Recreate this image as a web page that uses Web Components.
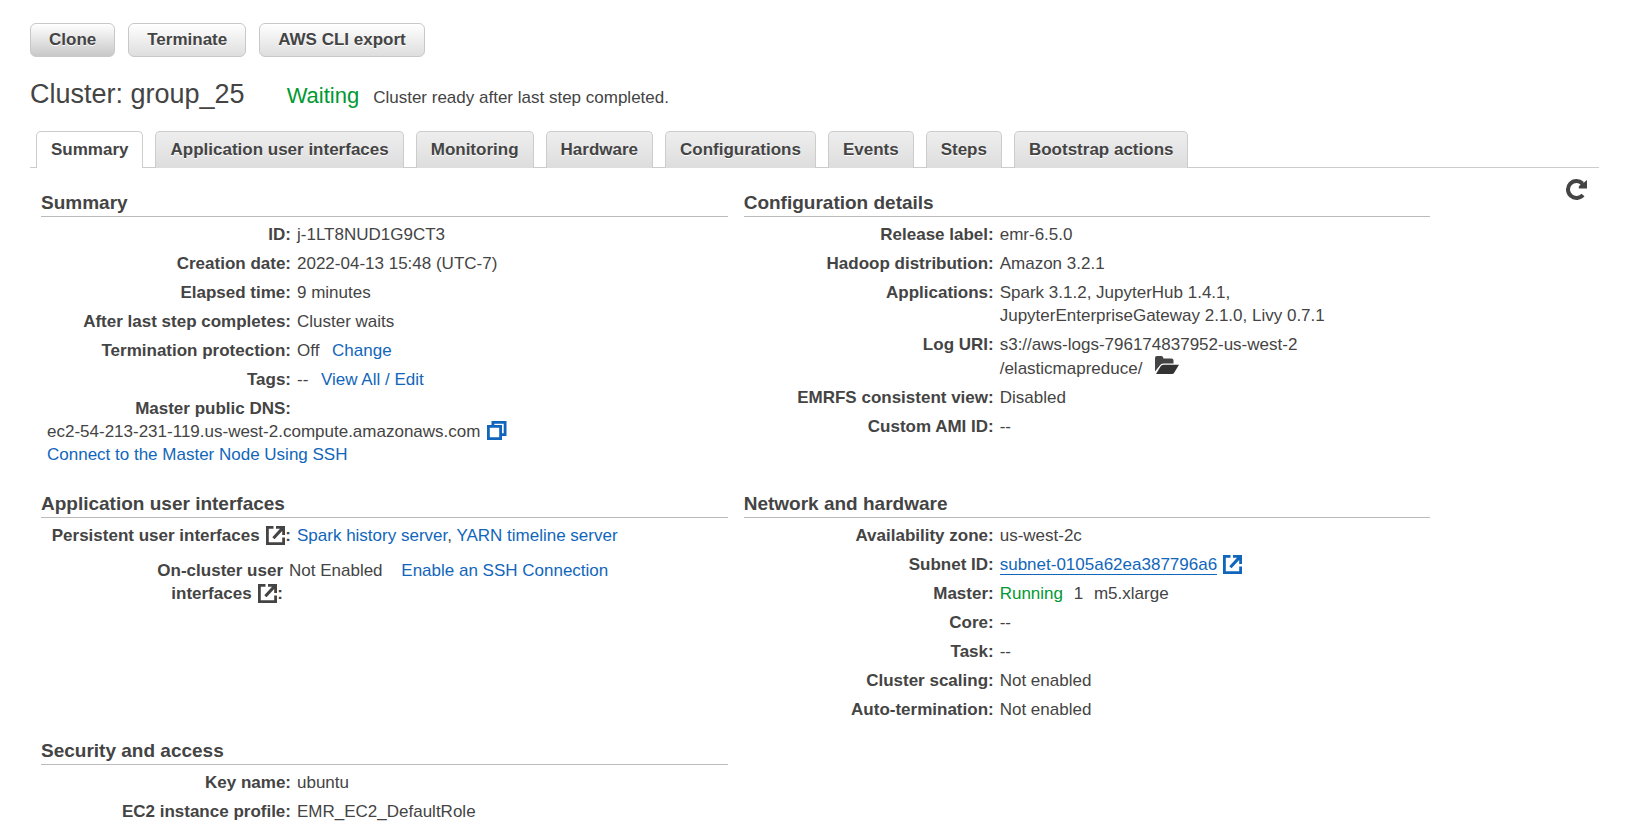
<!DOCTYPE html>
<html lang="en">
<head>
<meta charset="utf-8">
<title>Cluster: group_25</title>
<style>
  body { margin: 0; background: #fff; color: #444; font: 17px/23px "Liberation Sans", Arial, sans-serif; }
</style>
</head>
<body>
<emr-cluster-page></emr-cluster-page>
<script>
const define = (name, html, setup) => {
  const tpl = document.createElement('template');
  tpl.innerHTML = html;
  customElements.define(name, class extends HTMLElement {
    constructor() {
      super();
      this.attachShadow({ mode: 'open' }).append(tpl.content.cloneNode(true));
    }
    connectedCallback() { if (setup) setup(this, this.shadowRoot); }
  });
};

/* Icons, each drawn in its own view box */
const icons = {
  external: [19, 19, '<path d="M7.500 1.400H1.400V17.600H17.600V11.500" fill="none" stroke="currentColor" stroke-width="2.8"/><path d="M10 0H19V9H16.200V5L8.500 13.300L6.300 11.300L14 2.800H10Z" fill="currentColor"/>'],
  copy: [20, 20, '<path d="M1.400 5.400H13.600V17.600H1.400Z" fill="none" stroke="currentColor" stroke-width="2.8"/><path d="M5.900 4V1.400H18.100V13.600H15" fill="none" stroke="currentColor" stroke-width="2.8"/>'],
  folder: [24, 22, '<path d="M0 15.500V2Q0 0 2 0H6.500Q8.300 0 8.500 2.500H16.500Q18.500 2.500 18.500 4.500V7.500H8.500Q6 7.500 4.800 9.500Z" fill="#444"/><path d="M1 18L5.500 10.500Q6.500 8.800 8.500 8.800H24L19 17Q18.300 18 17 18Z" fill="#333"/>'],
  refresh: [21, 22, '<path d="M17 16A8.500 8.500 0 1 1 16.500 4.500" fill="none" stroke="#444" stroke-width="4"/><path d="M21 1V9.500H12.800V7.500L15.500 4.500L18 3.500Z" fill="#444"/>']
};
define('emr-icon', '<style>:host{display:inline-block;vertical-align:-4px;line-height:0}svg{display:block}</style>', (el, root) => {
  const [w, h, art] = icons[el.getAttribute('name')];
  root.innerHTML += `<svg width="${w}" height="${h}" viewBox="0 0 ${w} ${h}" aria-hidden="true">${art}</svg>`;
});

define('emr-button', `<style>
  :host{display:block}
  button{display:block;height:34px;padding:0 18px;border:1px solid #c8c8c8;border-radius:6px;background:linear-gradient(#fff,#dedede);color:#444;font:bold 17px/32px "Liberation Sans",Arial,sans-serif;text-shadow:0 1px 0 #fff;cursor:pointer}
  :host([pressed]) button{background:linear-gradient(#fff,#c8c8c8)}
</style><button type="button"><slot></slot></button>`);

define('emr-tab', `<style>
  :host{display:block;margin-bottom:-1px}
  button{display:block;height:37px;padding:0 14px;border:1px solid #ccc;border-bottom:0;border-radius:5px 5px 0 0;background:linear-gradient(#eee,#ddd);color:#444;font:bold 17px/36px "Liberation Sans",Arial,sans-serif;text-shadow:0 1px 0 #fff;white-space:nowrap;cursor:pointer}
  :host([selected]) button{background:#fff}
</style><button type="button" role="tab"><slot></slot></button>`, (el, root) => {
  root.querySelector('button').setAttribute('aria-selected', el.hasAttribute('selected'));
});

define('emr-link', `<style>
  :host{display:inline}
  a{color:#16b;text-decoration:none}
  :host([underlined]) a{border-bottom:1px solid #16b}
</style><a href="#"><slot></slot></a>`);

define('emr-section', `<style>
  :host{display:block;min-width:0}
  h2{margin:0 0 3px;padding-bottom:2px;border-bottom:1px solid #bbb;font-size:19px;line-height:23px;font-weight:bold}
</style><h2></h2><slot></slot>`, (el, root) => {
  root.querySelector('h2').textContent = el.getAttribute('heading');
});

define('emr-field', `<style>
  :host{display:grid;grid-template-columns:250px minmax(0,350px);column-gap:6px;padding:3px 0}
  :host([narrow]){grid-template-columns:242px minmax(0,350px);padding-top:9px}
  .label{font-weight:bold;text-align:right}
  .wide{grid-column:1 / -1;padding-left:6px}
</style><div class="label"><slot name="label"></slot></div><div><slot></slot></div><div class="wide"><slot name="wide"></slot></div>`);

define('emr-cluster-page', `<style>
  :host{display:block;padding:23px 31px 0 30px}
  .actions{display:flex;gap:13px}
  header{display:flex;align-items:baseline;margin-top:20px}
  h1{margin:0 42px 0 0;font-size:27px;line-height:34px;font-weight:normal}
  .state{margin-right:14px;font-size:22px}
  .ok{color:#093}
  .tabs{display:flex;gap:12px;margin-top:20px;padding-left:6px;border-bottom:1px solid #ccc}
  main{display:grid;grid-template-columns:9fr 9fr 2fr;gap:15px 16px;padding:23px 0 0 11px}
  .tools{display:flex;justify-content:flex-end;align-items:flex-start;padding-right:12px}
  .tools button{display:block;margin-top:-12px;padding:0;border:0;background:none}
  .dns{margin-bottom:8px}
  .tight{margin-left:2px}
  .near{margin-left:6px}
  .push{margin-left:8px}
  .far{margin-left:14px}
  .first{grid-column:1}
</style>
<div class="actions">
  <emr-button pressed>Clone</emr-button><emr-button>Terminate</emr-button><emr-button>AWS CLI export</emr-button>
</div>
<header><h1>Cluster: group_25</h1><span class="state ok">Waiting</span><span>Cluster ready after last step completed.</span></header>
<div class="tabs" role="tablist">
  <emr-tab selected>Summary</emr-tab><emr-tab>Application user interfaces</emr-tab><emr-tab>Monitoring</emr-tab><emr-tab>Hardware</emr-tab><emr-tab>Configurations</emr-tab><emr-tab>Events</emr-tab><emr-tab>Steps</emr-tab><emr-tab>Bootstrap actions</emr-tab>
</div>
<main>
  <emr-section heading="Summary">
    <emr-field><span slot="label">ID:</span>j-1LT8NUD1G9CT3</emr-field>
    <emr-field><span slot="label">Creation date:</span>2022-04-13 15:48 (UTC-7)</emr-field>
    <emr-field><span slot="label">Elapsed time:</span>9 minutes</emr-field>
    <emr-field><span slot="label">After last step completes:</span>Cluster waits</emr-field>
    <emr-field><span slot="label">Termination protection:</span>Off <emr-link class="push">Change</emr-link></emr-field>
    <emr-field><span slot="label">Tags:</span>-- <emr-link class="push">View All / Edit</emr-link></emr-field>
    <emr-field class="dns"><span slot="label">Master public DNS:</span><div slot="wide">ec2-54-213-231-119.us-west-2.compute.amazonaws.com <emr-link class="tight" aria-label="Copy"><emr-icon name="copy"></emr-icon></emr-link></div><div slot="wide"><emr-link>Connect to the Master Node Using SSH</emr-link></div></emr-field>
  </emr-section>
  <emr-section heading="Configuration details">
    <emr-field><span slot="label">Release label:</span>emr-6.5.0</emr-field>
    <emr-field><span slot="label">Hadoop distribution:</span>Amazon 3.2.1</emr-field>
    <emr-field><span slot="label">Applications:</span>Spark 3.1.2, JupyterHub 1.4.1, JupyterEnterpriseGateway 2.1.0, Livy 0.7.1</emr-field>
    <emr-field><span slot="label">Log URI:</span>s3://aws-logs-796174837952-us-west-2<wbr>/elasticmapreduce/ <emr-icon class="push" name="folder"></emr-icon></emr-field>
    <emr-field><span slot="label">EMRFS consistent view:</span>Disabled</emr-field>
    <emr-field><span slot="label">Custom AMI ID:</span>--</emr-field>
  </emr-section>
  <div class="tools"><button type="button" aria-label="Refresh"><emr-icon name="refresh"></emr-icon></button></div>
  <emr-section class="first" heading="Application user interfaces">
    <emr-field><span slot="label">Persistent user interfaces <emr-icon class="tight" name="external"></emr-icon>:</span><emr-link>Spark history server</emr-link>, <emr-link>YARN timeline server</emr-link></emr-field>
    <emr-field narrow><span slot="label">On-cluster user<br>interfaces <emr-icon class="tight" name="external"></emr-icon>:</span>Not Enabled <emr-link class="far">Enable an SSH Connection</emr-link></emr-field>
  </emr-section>
  <emr-section heading="Network and hardware">
    <emr-field><span slot="label">Availability zone:</span>us-west-2c</emr-field>
    <emr-field><span slot="label">Subnet ID:</span><emr-link underlined>subnet-0105a62ea387796a6</emr-link><emr-link class="near"><emr-icon name="external"></emr-icon></emr-link></emr-field>
    <emr-field><span slot="label">Master:</span><span class="ok">Running</span> <span class="near">1</span> <span class="near">m5.xlarge</span></emr-field>
    <emr-field><span slot="label">Core:</span>--</emr-field>
    <emr-field><span slot="label">Task:</span>--</emr-field>
    <emr-field><span slot="label">Cluster scaling:</span>Not enabled</emr-field>
    <emr-field><span slot="label">Auto-termination:</span>Not enabled</emr-field>
  </emr-section>
  <emr-section class="first" heading="Security and access">
    <emr-field><span slot="label">Key name:</span>ubuntu</emr-field>
    <emr-field><span slot="label">EC2 instance profile:</span>EMR_EC2_DefaultRole</emr-field>
  </emr-section>
</main>`);
</script>
</body>
</html>
